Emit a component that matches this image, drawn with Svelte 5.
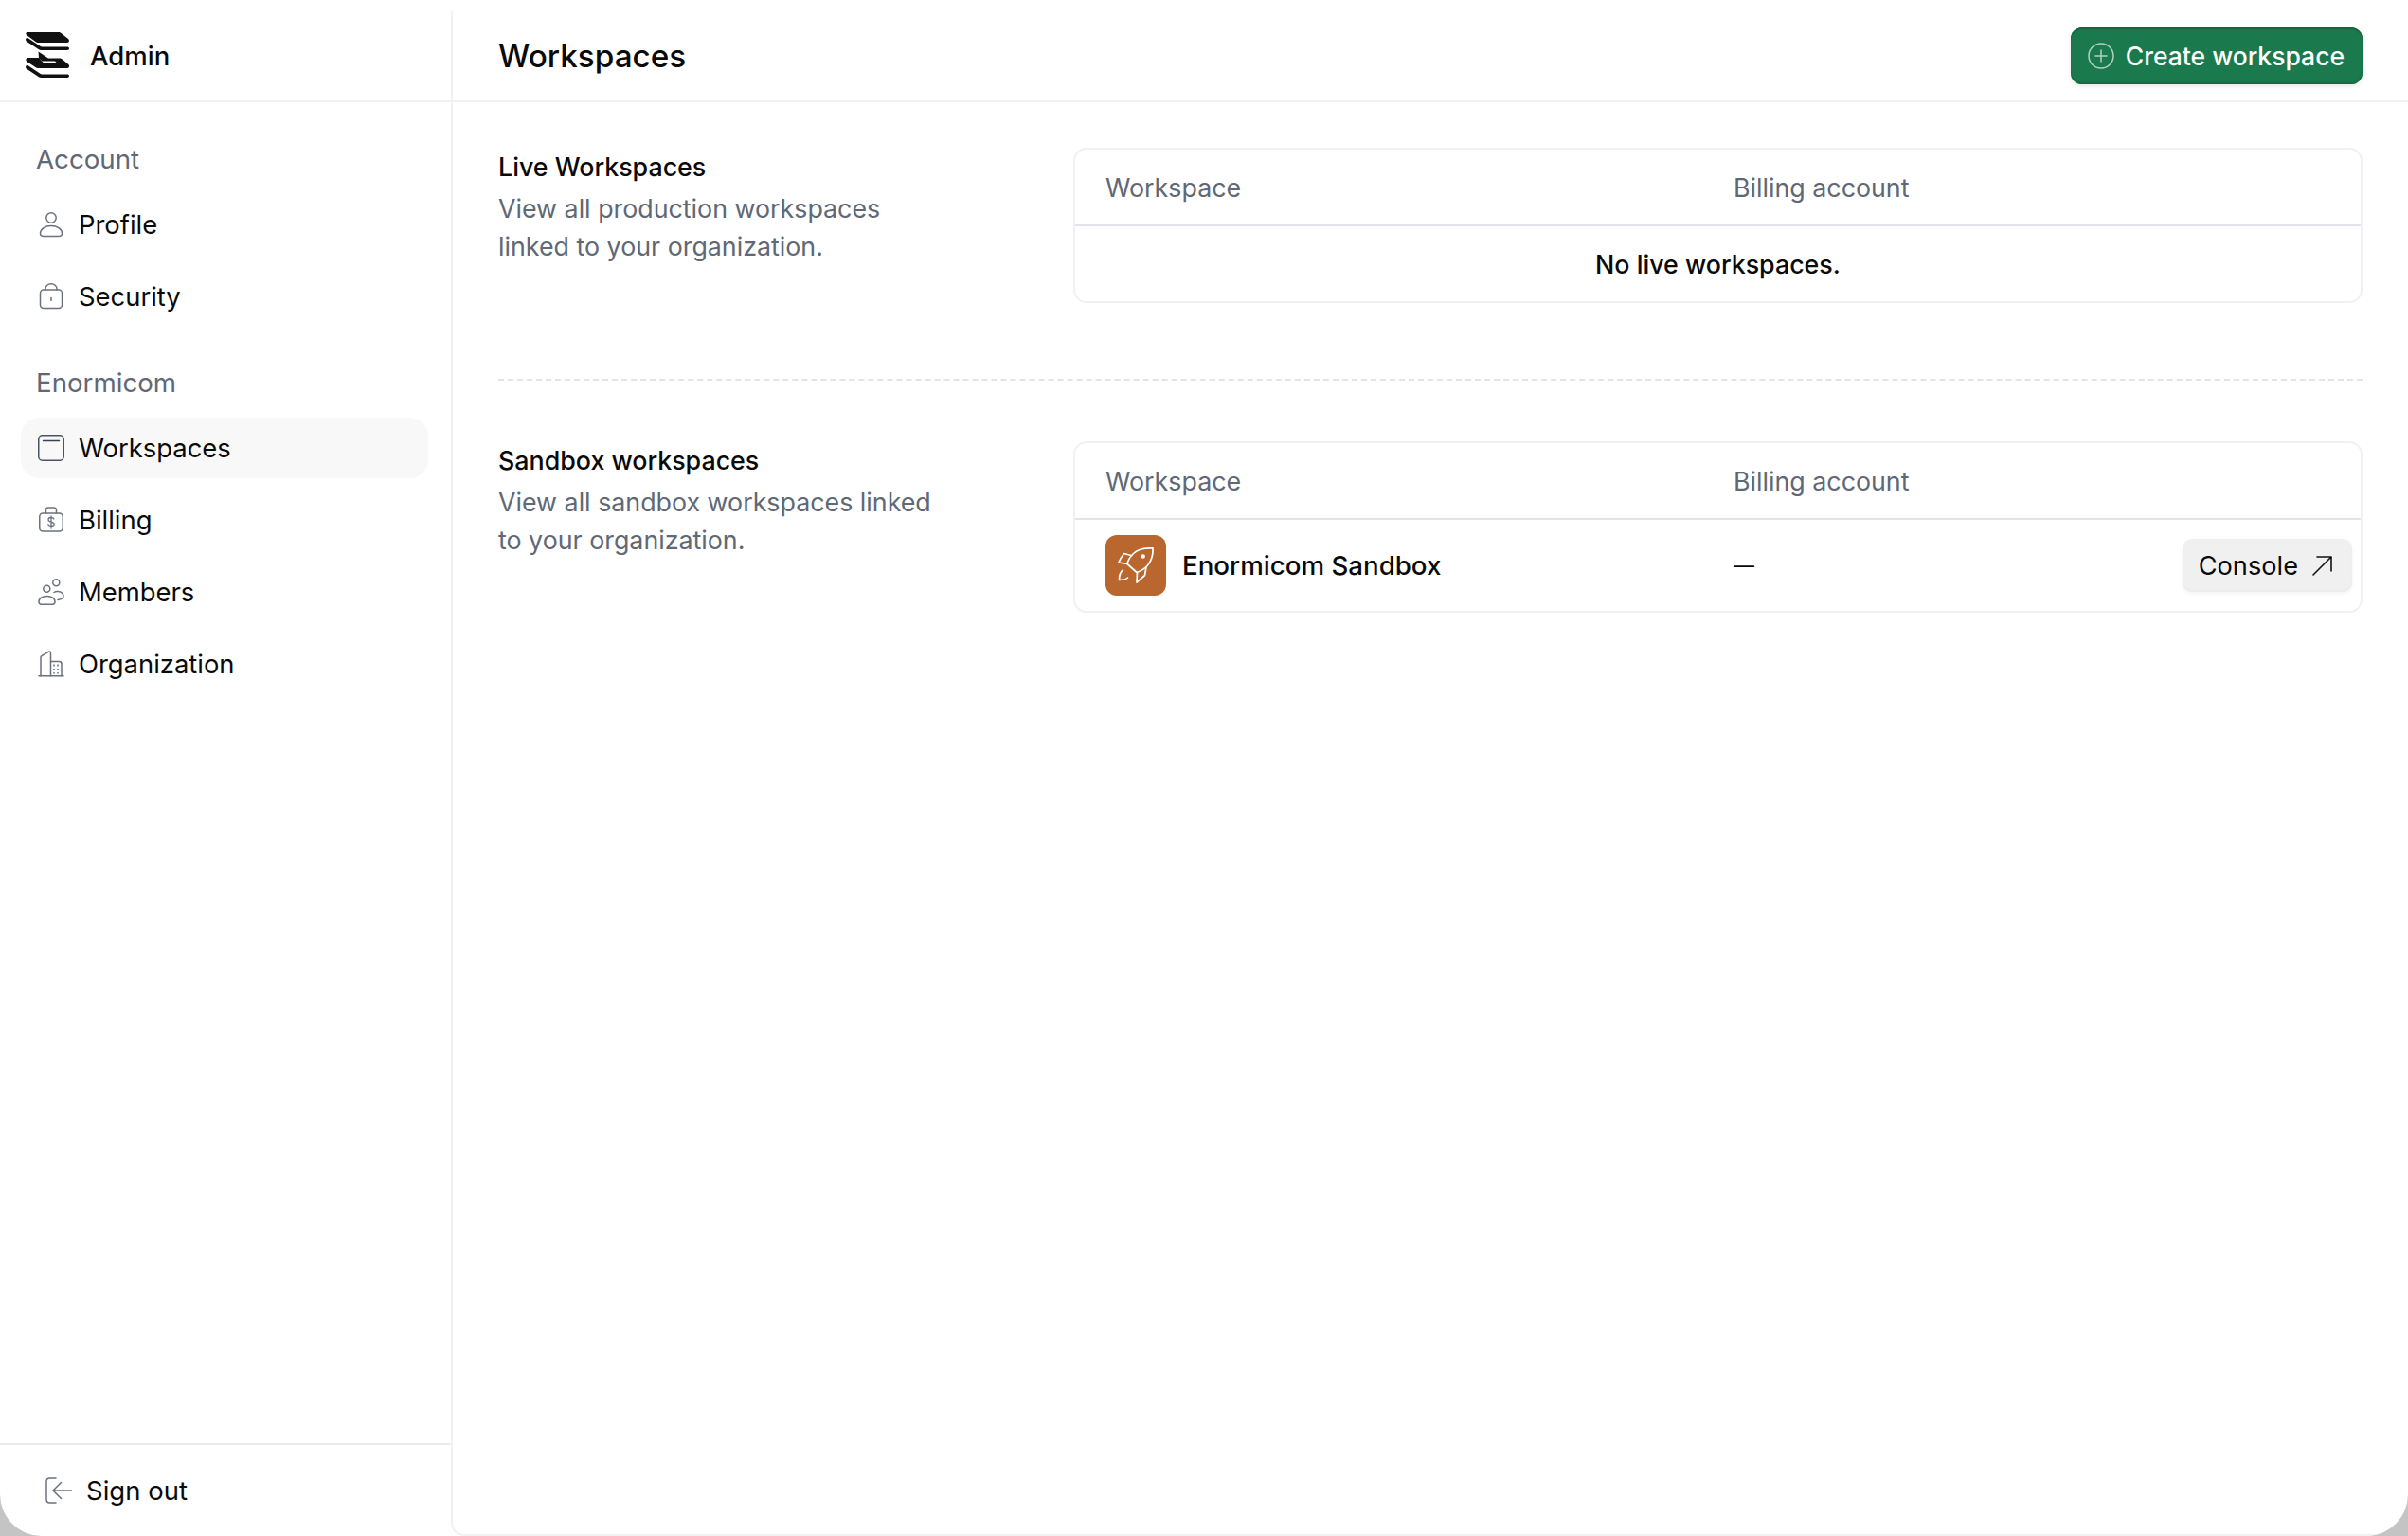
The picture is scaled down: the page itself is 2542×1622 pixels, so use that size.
<script>
	const account = [
		{ label: 'Profile', icon: 'profile' },
		{ label: 'Security', icon: 'security' }
	];
	const org = [
		{ label: 'Workspaces', icon: 'workspaces', active: true },
		{ label: 'Billing', icon: 'billing' },
		{ label: 'Members', icon: 'members' },
		{ label: 'Organization', icon: 'organization' }
	];
</script>

{#snippet navIcon(name)}
	<svg class="nav-icon" viewBox="0 0 28 28" fill="none" stroke="#6b7280" stroke-width="1.5" stroke-linecap="round" stroke-linejoin="round">
		{#if name === 'profile'}
			<circle cx="14" cy="7" r="5.2" />
			<path d="M2.5 23.500c0-4.500 5-8 11.500-8s11.500 3.500 11.500 8c0 2-1.500 3-3.500 3H6c-2 0-3.500-1-3.500-3z" />
		{:else if name === 'security'}
			<rect x="2.500" y="7" width="23" height="19.500" rx="3.500" />
			<path d="M8 7V6a6 5.250 0 0 1 12 0v1" />
			<path d="M14 15.500v3" />
		{:else if name === 'workspaces'}
			<rect x=".75" y=".75" width="26.500" height="26.500" rx="4" stroke="#4b5563" />
			<path d="M5.500 6.500h17" stroke="#374151" />
		{:else if name === 'billing'}
			<rect x="1.750" y="7" width="24.500" height="19" rx="3.500" />
			<path d="M8.500 7V3.500A2.500 2.500 0 0 1 11 1h6a2.500 2.500 0 0 1 2.500 2.500V7" />
			<path d="M17 13c-.5-1-1.600-1.500-3-1.500-1.700 0-3 .8-3 2.300 0 3 6.200 1.500 6.200 4.500 0 1.400-1.400 2.200-3.200 2.200-1.500 0-2.700-.6-3.200-1.700M14 10v13" stroke-width="1.300" />
		{:else if name === 'members'}
			<circle cx="19.300" cy="4.300" r="3.500" />
			<circle cx="9.300" cy="10.700" r="3.500" />
			<path d="M1 24.500c0-3.500 3.500-6 8.500-6s8.500 2.500 8.500 6c0 1.600-1 2.700-2.500 2.700h-12C2 27.200 1 26.100 1 24.500z" />
			<path d="M17 14.500c1.500-1 3-1.300 4.500-1 3.200.5 5.500 2.500 5.500 5 0 2-2.500 3.500-6 4" />
		{:else if name === 'organization'}
			<path d="M1 26.750h26" />
			<path d="M3 26.750V7c0-.6.300-1 1-1.300l7.500-4.500c1-.5 2 0 2 1.300v24.250" />
			<path d="M13.500 11.500h9c1.200 0 2.500 1 2.500 2.500v12.750" />
			<path d="M17 14.500v2M21 14.500v2M17 19v2M21 19v2M17 23v1.500M21 23v1.500" stroke-width="1.500" stroke-linecap="butt" />
		{/if}
	</svg>
{/snippet}

<div class="app">
	<aside class="sidebar">
		<div class="brand">
			<svg class="logo" viewBox="0 0 46 50" fill="#111" fill-rule="evenodd">
				<path d="M2 0h33c1 0 1.500.3 2.500 1l7.500 6c1.500 1.200 1.300 4-1 4H13c-1 0-1.700-.3-2.500-1L1 3C-.2 2 .3 0 2 0z" />
				<path d="M.8 9.500 13.500 18c1 .7 2 1 3 1h27.500c2.700 0 2.700-3.500 0-3.500H17.500c-1 0-1.700-.3-2.500-1L3 6.500C.5 5-.9 8 .8 9.500z" />
				<path d="M13.500 20.500 24 27.500h11.500c1.500 0 2.500.5 3.500 1.200l6 5c1.800 1.500 1.300 4.300-1 4.300H13c-1 0-1.700-.3-2.500-1L1.200 31C-.3 29.500.3 27 2.500 27H14l3.500 3.500H31l2.500 2.500H20l-3-2.500L14 27z" />
				<path d="M.8 38.500 13.500 47c1 .7 2 1 3 1h27.500c2.700 0 2.700-3.500 0-3.500H17.500c-1 0-1.700-.3-2.500-1L3 35.500C.5 34-.9 37 .8 38.500z" />
			</svg>
			<span>Admin</span>
		</div>

		<nav class="nav">
			<div class="nav-heading">Account</div>
			{#each account as item}
				<a class="nav-item" href="#top">
					{@render navIcon(item.icon)}
					{item.label}
				</a>
			{/each}

			<div class="nav-heading second">Enormicom</div>
			{#each org as item}
				<a class="nav-item" class:active={item.active} href="#top">
					{@render navIcon(item.icon)}
					{item.label}
				</a>
			{/each}
		</nav>

		<a class="signout" href="#top">
			<svg viewBox="0 0 28 28" fill="none" stroke="#6b7280" stroke-width="1.500" stroke-linecap="round" stroke-linejoin="round">
				<path d="M11 1H4.500C2.500 1 1 2.500 1 4.500v19C1 25.500 2.500 27 4.500 27H11" />
				<path d="M27.500 14H8.500M16.500 5.500 8 14l8.500 8.500" />
			</svg>
			Sign out
		</a>
	</aside>

	<main class="main">
		<header class="topbar">
			<h1>Workspaces</h1>
			<button class="create">
				<svg viewBox="0 0 28 28" fill="none" stroke="rgba(255,255,255,.65)" stroke-width="1.500" stroke-linecap="round">
					<circle cx="14" cy="14" r="13" />
					<path d="M14 8v12M8 14h12" />
				</svg>
				Create workspace
			</button>
		</header>

		<div class="content">
			<section class="section">
				<div class="intro">
					<h2>Live Workspaces</h2>
					<p>View all production workspaces linked to your organization.</p>
				</div>
				<div class="table">
					<div class="row head">
						<div>Workspace</div>
						<div>Billing account</div>
					</div>
					<div class="empty">No live workspaces.</div>
				</div>
			</section>

			<hr class="divider" />

			<section class="section">
				<div class="intro">
					<h2>Sandbox workspaces</h2>
					<p>View all sandbox workspaces linked to your organization.</p>
				</div>
				<div class="table">
					<div class="row head">
						<div>Workspace</div>
						<div>Billing account</div>
					</div>
					<div class="row body">
						<div class="name">
							<span class="ws-icon">
								<svg viewBox="0 0 38 38" fill="none" stroke="#fff" stroke-width="1.700" stroke-linecap="round" stroke-linejoin="round">
									<path d="M37 .9C29 .5 21 2 16.500 6.500 13 10 10.500 15 10 17.500L20 26.500c3-1 8-3.500 11.500-7.500C35.500 14 37.500 8 37 .9z" />
									<circle cx="26.700" cy="9.500" r="2.200" fill="#fff" stroke="none" />
									<path d="M14 8.500 6.700 6.500Q3 11 .9 16l9.100 1.500" />
									<path d="M30 21l-1.500 8.500L20 37l.5-10.500" />
									<path d="M5.500 24C2.500 26 1.500 29 1.500 34.500c4 0 7-.5 9-2.500" />
								</svg>
							</span>
							Enormicom Sandbox
						</div>
						<div class="dash">—</div>
						<button class="console">
							Console
							<svg viewBox="0 0 21 21" fill="none" stroke="#111" stroke-width="1.600" stroke-linecap="round" stroke-linejoin="round">
								<path d="M1 20 20 1M5 1h15v15" />
							</svg>
						</button>
					</div>
				</div>
			</section>
		</div>
	</main>
</div>

<style>
	:global(body) {
		margin: 0;
		background: #c4c4c4;
	}

	.app {
		display: flex;
		width: 2542px;
		height: 1622px;
		box-sizing: border-box;
		padding-top: 12px;
		background: #fff;
		border-bottom-left-radius: 44px;
		border-bottom-right-radius: 44px;
		overflow: hidden;
		font-family: Inter, 'Liberation Sans', sans-serif;
		color: #0a0a0a;
	}

	.sidebar {
		width: 476px;
		flex: none;
		display: flex;
		flex-direction: column;
	}

	.brand {
		height: 96px;
		box-sizing: border-box;
		display: flex;
		align-items: center;
		gap: 22px;
		padding-left: 27px;
		border-bottom: 2px solid #f1f1f1;
		font-size: 27.500px;
		font-weight: 500;
	}

	.logo {
		width: 46px;
		height: 50px;
	}

	.nav {
		flex: 1;
		padding: 43px 24px 0 22px;
		display: flex;
		flex-direction: column;
	}

	.nav-heading {
		font-size: 27.700px;
		line-height: 34px;
		color: #606875;
		padding-left: 16px;
		margin-bottom: 20px;
	}

	.nav-heading.second {
		margin-top: 30px;
	}

	.nav-item {
		display: flex;
		align-items: center;
		gap: 15px;
		height: 64px;
		margin-bottom: 12px;
		padding-left: 18px;
		border-radius: 20px;
		font-size: 27.400px;
		color: #0a0a0a;
		text-decoration: none;
	}

	.nav-item.active {
		background: #f8f8f8;
	}

	.nav-icon {
		width: 28px;
		height: 28px;
		flex: none;
	}

	.signout {
		height: 96px;
		display: flex;
		align-items: center;
		gap: 15px;
		padding-left: 48px;
		border-top: 2px solid #ebebeb;
		font-size: 27.500px;
		color: #0a0a0a;
		text-decoration: none;
	}

	.signout svg {
		width: 28px;
		height: 28px;
	}

	.main {
		flex: 1;
		min-width: 0;
		display: flex;
		flex-direction: column;
		border-left: 2px solid #f2f2f2;
		border-bottom: 2px solid #f2f2f2;
		border-bottom-left-radius: 14px;
	}

	.topbar {
		height: 96px;
		box-sizing: border-box;
		display: flex;
		align-items: center;
		justify-content: space-between;
		padding: 0 48px 0 48px;
		border-bottom: 2px solid #f1f1f1;
	}

	h1 {
		margin: 0;
		font-size: 33.300px;
		font-weight: 500;
	}

	.create {
		display: flex;
		align-items: center;
		gap: 12px;
		height: 60px;
		padding: 0 19px 0 18px;
		border: none;
		border-radius: 12px;
		background: #1a7a4e;
		color: #fff;
		font: inherit;
		font-size: 26.500px;
		font-weight: 500;
		box-shadow:
			inset 0 2px 1px #14663f,
			inset 0 -2px 2px #166b44,
			0 2px 4px rgba(0, 0, 0, 0.1);
	}

	.create svg {
		width: 28px;
		height: 28px;
	}

	.content {
		padding: 48px 48px 0 48px;
	}

	.section {
		display: flex;
	}

	.intro {
		width: 607px;
		flex: none;
	}

	h2 {
		margin: 0 0 6px;
		padding-top: 2px;
		font-size: 26.800px;
		line-height: 36px;
		font-weight: 450;
	}

	.intro p {
		margin: 0;
		width: 470px;
		font-size: 26.800px;
		line-height: 40px;
		color: #606875;
	}

	.table {
		flex: 1;
		border: 2px solid #f1f1f1;
		border-radius: 14px;
		overflow: hidden;
	}

	.row {
		display: grid;
		grid-template-columns: 663px 1fr auto;
		align-items: center;
		padding: 0 9px 0 32px;
	}

	.head {
		height: 81px;
		border-bottom: 2px solid #e3e3ea;
		box-sizing: border-box;
		font-size: 26.800px;
		color: #606875;
		grid-template-columns: 663px 1fr;
	}

	.body {
		height: 96px;
		font-size: 27.700px;
	}

	.empty {
		height: 79px;
		display: flex;
		align-items: center;
		justify-content: center;
		font-size: 26.800px;
		font-weight: 450;
	}

	.name {
		display: flex;
		align-items: center;
		gap: 17px;
		font-weight: 550;
	}

	.ws-icon {
		width: 64px;
		height: 64px;
		border-radius: 12px;
		background: #b9662f;
		display: flex;
		align-items: center;
		justify-content: center;
	}

	.ws-icon svg {
		width: 38px;
		height: 38px;
	}

	.dash {
		font-size: 22px;
	}

	.console {
		display: flex;
		align-items: center;
		gap: 15px;
		height: 56px;
		padding: 0 21px 0 17px;
		border: none;
		border-radius: 10px;
		background: #f0f0f0;
		color: #0a0a0a;
		font: inherit;
		font-size: 27.200px;
		font-weight: 400;
		box-shadow:
			inset 0 -2px 2px #ebebeb,
			0 2px 4px rgba(0, 0, 0, 0.05);
	}

	.console svg {
		width: 21px;
		height: 21px;
	}

	.divider {
		border: none;
		border-top: 2px dashed #e3e3ea;
		margin: 80px 0 64px;
	}
</style>
